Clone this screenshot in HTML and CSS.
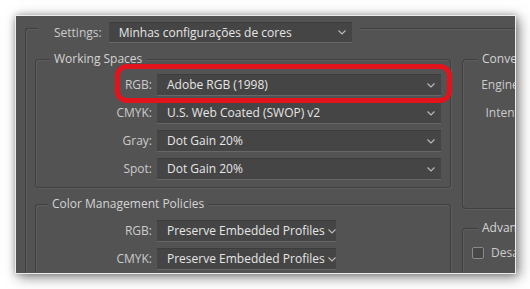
FILE: index.html
```html
<!DOCTYPE html>
<html>
<head>
<meta charset="utf-8">
<link rel="stylesheet" href="styles.css">
</head>
<body>
<div class="dialog">
  <div class="frame">
    <div class="settings">
      <span class="lbl">Settings:</span>
      <div class="select w-settings"><span>Minhas configurações de cores</span><svg class="chev" width="8" height="5" viewBox="0 0 8 5"><path d="M0.5 0.5 L4 4 L7.5 0.5" /></svg></div>
    </div>
    <div class="cols">
      <div class="col-left">
        <section class="group ws">
          <div class="legend">Working Spaces</div>
          <div class="grid">
            <span class="lbl">RGB:</span>
            <div class="select w-ws"><span>Adobe RGB (1998)</span><svg class="chev" width="8" height="5" viewBox="0 0 8 5"><path d="M0.5 0.5 L4 4 L7.5 0.5" /></svg></div>
            <span class="lbl">CMYK:</span>
            <div class="select w-ws"><span>U.S. Web Coated (SWOP) v2</span><svg class="chev" width="8" height="5" viewBox="0 0 8 5"><path d="M0.5 0.5 L4 4 L7.5 0.5" /></svg></div>
            <span class="lbl">Gray:</span>
            <div class="select w-ws"><span>Dot Gain 20%</span><svg class="chev" width="8" height="5" viewBox="0 0 8 5"><path d="M0.5 0.5 L4 4 L7.5 0.5" /></svg></div>
            <span class="lbl">Spot:</span>
            <div class="select w-ws"><span>Dot Gain 20%</span><svg class="chev" width="8" height="5" viewBox="0 0 8 5"><path d="M0.5 0.5 L4 4 L7.5 0.5" /></svg></div>
          </div>
        </section>
        <section class="group cmp">
          <div class="legend legend-cmp">Color Management Policies</div>
          <div class="grid grid-cmp">
            <span class="lbl">RGB:</span>
            <div class="select w-cmp"><span>Preserve Embedded Profiles</span><svg class="chev" width="8" height="5" viewBox="0 0 8 5"><path d="M0.5 0.5 L4 4 L7.5 0.5" /></svg></div>
            <span class="lbl">CMYK:</span>
            <div class="select w-cmp"><span>Preserve Embedded Profiles</span><svg class="chev" width="8" height="5" viewBox="0 0 8 5"><path d="M0.5 0.5 L4 4 L7.5 0.5" /></svg></div>
          </div>
        </section>
      </div>
      <div class="col-right">
        <section class="group conv">
          <div class="legend legend-right">Conversion Options</div>
          <div class="grid grid-conv">
            <span class="lbl">Engine:</span>
            <div class="select w-conv"><span>Adobe (ACE)</span></div>
            <span class="lbl">Intent:</span>
            <div class="select w-conv"><span>Relative Colorimetric</span></div>
          </div>
        </section>
        <section class="group adv">
          <div class="legend legend-right">Advanced Controls</div>
          <div class="check"><span class="box"></span><span class="lbl">Desaturate Monitor Colors By:</span></div>
        </section>
      </div>
    </div>
  </div>
  <div class="highlight"></div>
</div>
</body>
</html>
```

FILE: styles.css
```css
html, body {
  margin: 0;
  background: #ffffff;
}
body {
  padding: 15px 0 0 15px;
  width: 530px;
  height: 289px;
  box-sizing: border-box;
  overflow: hidden;
  font-family: "Open Sans", "Noto Sans", sans-serif;
  font-size: 12px;
}
.dialog {
  position: relative;
  width: 501px;
  height: 259px;
  box-sizing: border-box;
  border: 1px solid #ececec;
  background: #535353;
  overflow: hidden;
  box-shadow: 3px 3px 12px rgba(0, 0, 0, 0.5), 0 0 6px rgba(0, 0, 0, 0.2);
}
.frame {
  margin: 12px 0 0 9px;
  width: 800px;
  height: 400px;
  border-top: 1px solid #3f3f3f;
  border-left: 1px solid #3f3f3f;
  border-top-left-radius: 3px;
  box-shadow: inset 1px 1px 0 #5e5e5e;
}
.lbl {
  color: #cbcbcb;
  white-space: nowrap;
  line-height: 16px;
}
.settings {
  display: flex;
  align-items: center;
  gap: 7px;
  width: fit-content;
  margin: -7px 0 0 12px;
  padding: 0 8px 0 16px;
  background: #535353;
}
.select {
  box-sizing: border-box;
  height: 22px;
  display: flex;
  align-items: center;
  justify-content: space-between;
  gap: 3px;
  padding: 0 6px 0 10px;
  background: #454545;
  border-top: 1px solid #3d3d3d;
  border-bottom: 1px solid #676767;
  color: #e6e6e6;
  white-space: nowrap;
  line-height: 16px;
  flex-shrink: 0;
  overflow: hidden;
}
.chev {
  flex-shrink: 0;
}
.chev path {
  fill: none;
  stroke: #bdbdbd;
  stroke-width: 1.1;
}
.w-settings {
  width: 243px;
  height: 21px;
}
.w-ws {
  width: 284px;
}
.w-cmp {
  width: 179px;
  padding-right: 3px;
}
.w-conv {
  width: 200px;
}
.cols {
  display: flex;
  margin: 16px 0 0 9px;
}
.col-left {
  width: 416px;
  flex-shrink: 0;
}
.col-right {
  width: 300px;
  flex-shrink: 0;
  margin-left: 11px;
}
.group {
  box-sizing: border-box;
  border: 1px solid #3f3f3f;
  border-radius: 3px;
  box-shadow: inset 1px 1px 0 #5e5e5e, 1px 1px 0 #5e5e5e;
}
.ws {
  height: 129px;
}
.cmp {
  margin-top: 16px;
  height: 120px;
}
.conv {
  height: 150px;
  border-radius: 4px;
}
.adv {
  margin-top: 19px;
  height: 100px;
}
.legend {
  width: fit-content;
  height: 16px;
  line-height: 16px;
  margin: -9px 0 0 14px;
  padding: 0 4px;
  background: #535353;
  color: #d4d4d4;
  white-space: nowrap;
}
.legend-cmp {
  margin-left: 12px;
}
.legend-right {
  margin-left: 15px;
}
.grid {
  display: grid;
  grid-template-columns: 116px auto;
  column-gap: 5px;
  row-gap: 6px;
  align-items: center;
  justify-items: start;
  margin-top: 7px;
}
.grid .lbl {
  justify-self: end;
}
.grid-cmp {
  margin-top: 8px;
}
.grid-conv {
  grid-template-columns: 59px auto;
}
.check {
  display: flex;
  align-items: center;
  gap: 7px;
  height: 14px;
  margin: 10px 0 0 9px;
}
.box {
  width: 12px;
  height: 12px;
  box-sizing: border-box;
  border: 1px solid #8a8a8a;
  border-radius: 2px;
  background: #474747;
  flex-shrink: 0;
}
.highlight {
  position: absolute;
  left: 99px;
  top: 48px;
  width: 337px;
  height: 39px;
  box-sizing: border-box;
  border: 5px solid #e3131b;
  border-radius: 12px;
}
```
